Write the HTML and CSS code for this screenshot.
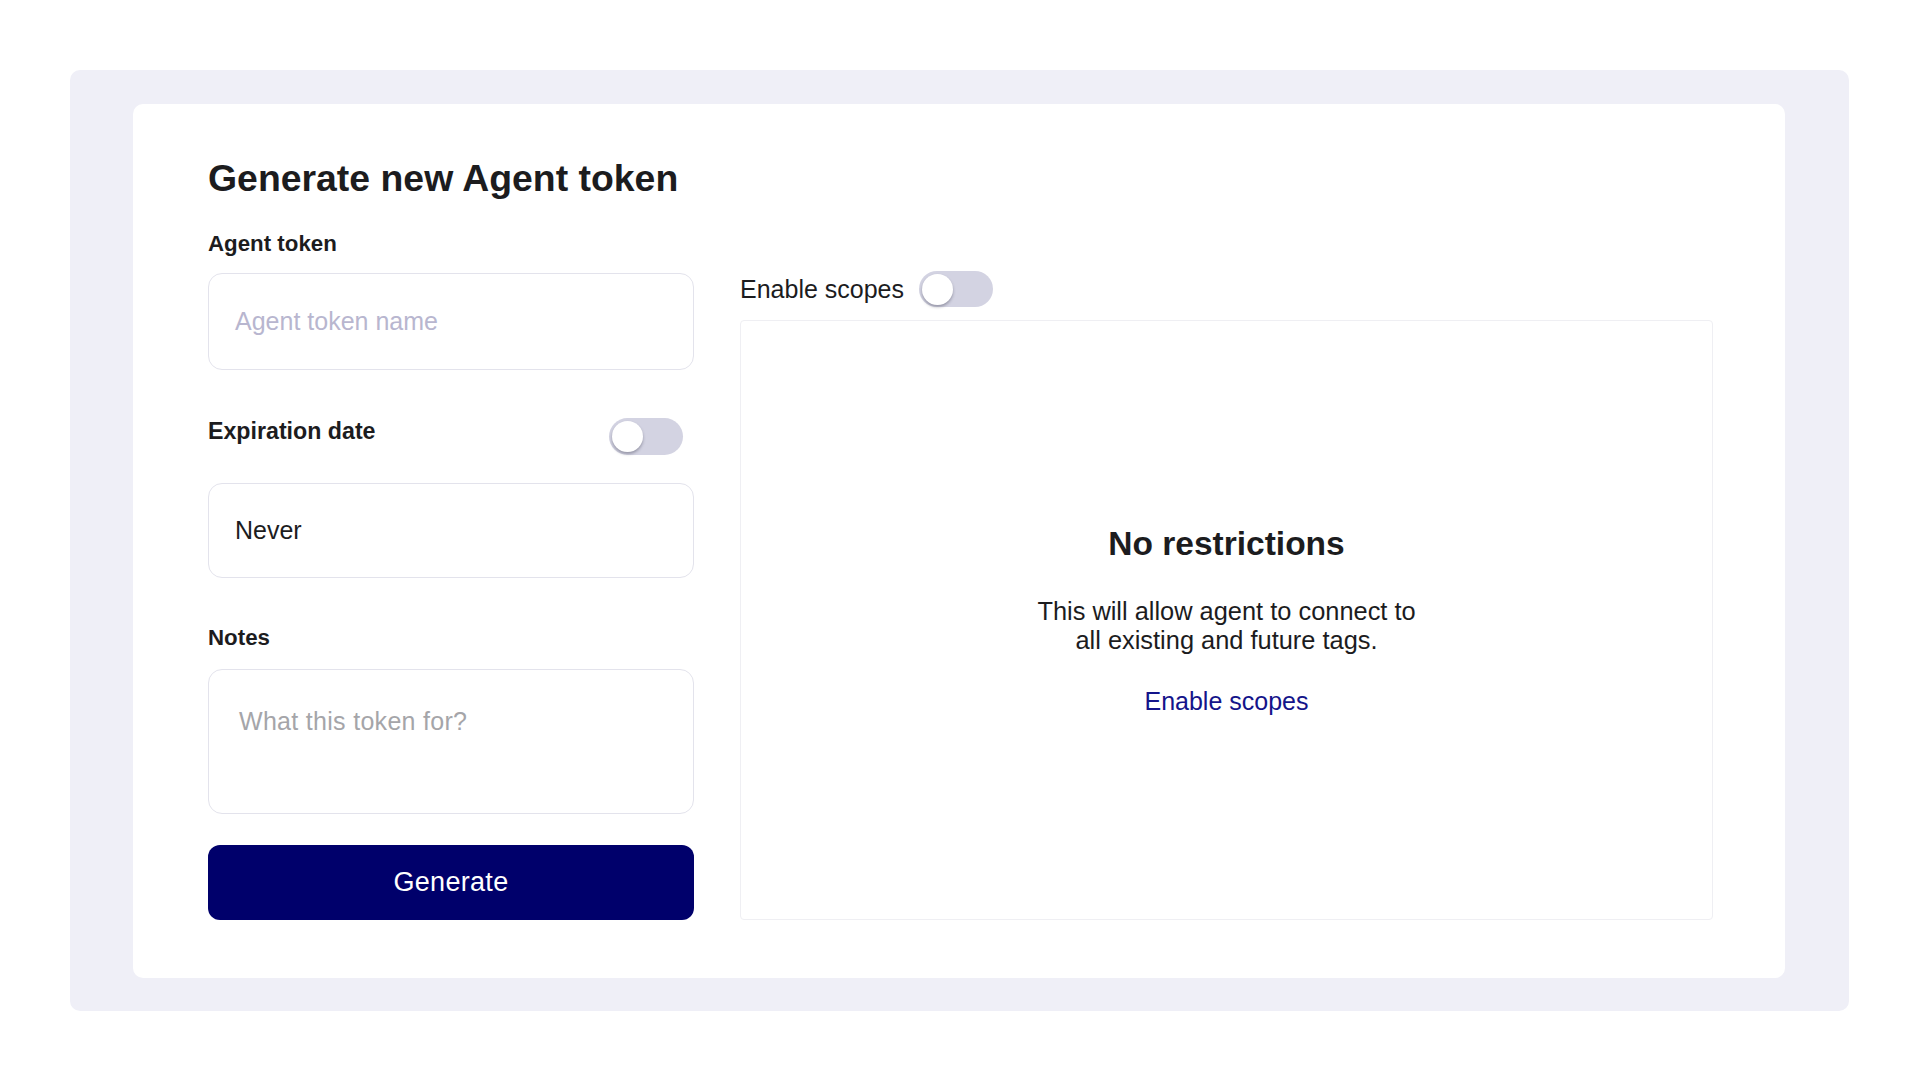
FILE: index.html
```html
<!DOCTYPE html>
<html lang="en">
<head>
<meta charset="utf-8">
<title>Generate new Agent token</title>
<link rel="stylesheet" href="styles.css">
</head>
<body>
<div class="page">
  <div class="frame">
    <div class="card">
      <h1 class="title">Generate new Agent token</h1>
      <div class="columns">
        <div class="form">
          <label class="label">Agent token</label>
          <div class="input placeholder-lav">Agent token name</div>

          <div class="row-toggle">
            <label class="label label-exp">Expiration date</label>
            <span class="toggle"><span class="knob"></span></span>
          </div>
          <div class="input input-value">Never</div>

          <label class="label label-notes">Notes</label>
          <div class="textarea">What this token for?</div>

          <button class="btn">Generate</button>
        </div>
        <div class="scopes">
          <div class="scopes-head">
            <span class="scopes-label">Enable scopes</span>
            <span class="toggle"><span class="knob"></span></span>
          </div>
          <div class="panel">
            <h2 class="panel-title">No restrictions</h2>
            <p class="panel-text">This will allow agent to connect to<br>all existing and future tags.</p>
            <a class="panel-link">Enable scopes</a>
          </div>
        </div>
      </div>
    </div>
  </div>
</div>
</body>
</html>
```

FILE: styles.css
```css
* { box-sizing: border-box; }
html, body {
  margin: 0;
  padding: 0;
  background: #ffffff;
  font-family: "Liberation Sans", Arial, Helvetica, sans-serif;
  color: #1c1c1e;
}
.page {
  padding: 70px 71px 71px 70px;
}
.frame {
  background: #efeff7;
  border-radius: 10px;
  padding: 34px 64px 33px 63px;
}
.card {
  background: #ffffff;
  border-radius: 10px;
  padding: 52px 72px 58px 75px;
}
.title {
  margin: 0;
  font-size: 37.4px;
  line-height: 44px;
  font-weight: 700;
  color: #1c1c1e;
}
.columns {
  display: flex;
  gap: 46px;
  margin-top: 31px;
}
.form {
  width: 486px;
  flex: none;
  display: flex;
  flex-direction: column;
}
.label {
  display: block;
  font-size: 22.3px;
  line-height: 26px;
  font-weight: 700;
  color: #1c1c1e;
}
.label-exp { font-size: 23.2px; }
.input {
  margin-top: 16px;
  height: 97px;
  border: 1px solid #e3e3ec;
  border-radius: 14px;
  padding: 0 26px;
  display: flex;
  align-items: center;
  font-size: 25px;
}
.placeholder-lav { color: #b8b6cf; }
.input-value {
  height: 95px;
  margin-top: 28px;
  color: #1c1c1e;
}
.row-toggle {
  margin-top: 48px;
  display: flex;
  align-items: center;
  justify-content: space-between;
  padding-right: 11px;
  height: 37px;
}
.row-toggle .label { margin-top: -12px; }
.label-notes { margin-top: 47px; }
.textarea {
  margin-top: 18px;
  height: 145px;
  border: 1px solid #e3e3ec;
  border-radius: 14px;
  padding: 36px 30px;
  font-size: 25px;
  line-height: 30px;
  letter-spacing: 0.3px;
  color: #a5a5a9;
}
.btn {
  margin-top: 31px;
  height: 75px;
  width: 100%;
  border: none;
  border-radius: 12px;
  background: #00006b;
  color: #ffffff;
  font-family: "Liberation Sans", Arial, sans-serif;
  font-size: 27px;
  font-weight: 400;
  letter-spacing: 0.3px;
}
.toggle {
  position: relative;
  display: inline-block;
  width: 74px;
  height: 37px;
  border-radius: 19px;
  background: #d3d3e2;
  flex: none;
}
.knob {
  position: absolute;
  left: 3px;
  top: 3px;
  width: 31px;
  height: 31px;
  border-radius: 50%;
  background: #ffffff;
  box-shadow: 0 2px 3px rgba(40, 40, 60, 0.35);
}
.scopes {
  flex: 1;
  display: flex;
  flex-direction: column;
  padding-top: 40px;
}
.scopes-head {
  display: flex;
  align-items: center;
  gap: 15px;
  height: 36px;
}
.scopes-head .toggle { height: 36px; }
.scopes-label {
  font-size: 25px;
  line-height: 30px;
  color: #1c1c1e;
}
.panel {
  margin-top: 13px;
  flex: 1;
  border: 1px solid #efeff3;
  border-radius: 4px;
  display: flex;
  flex-direction: column;
  align-items: center;
  justify-content: center;
  text-align: center;
}
.panel-title {
  margin: 0;
  font-size: 33.5px;
  line-height: 40px;
  font-weight: 700;
  color: #1c1c1e;
}
.panel-text {
  margin: 33px 0 0;
  font-size: 25.4px;
  line-height: 29px;
  color: #1c1c1e;
}
.panel-link {
  margin-top: 32px;
  font-size: 25px;
  line-height: 29px;
  color: #14148a;
  text-decoration: none;
}
```
